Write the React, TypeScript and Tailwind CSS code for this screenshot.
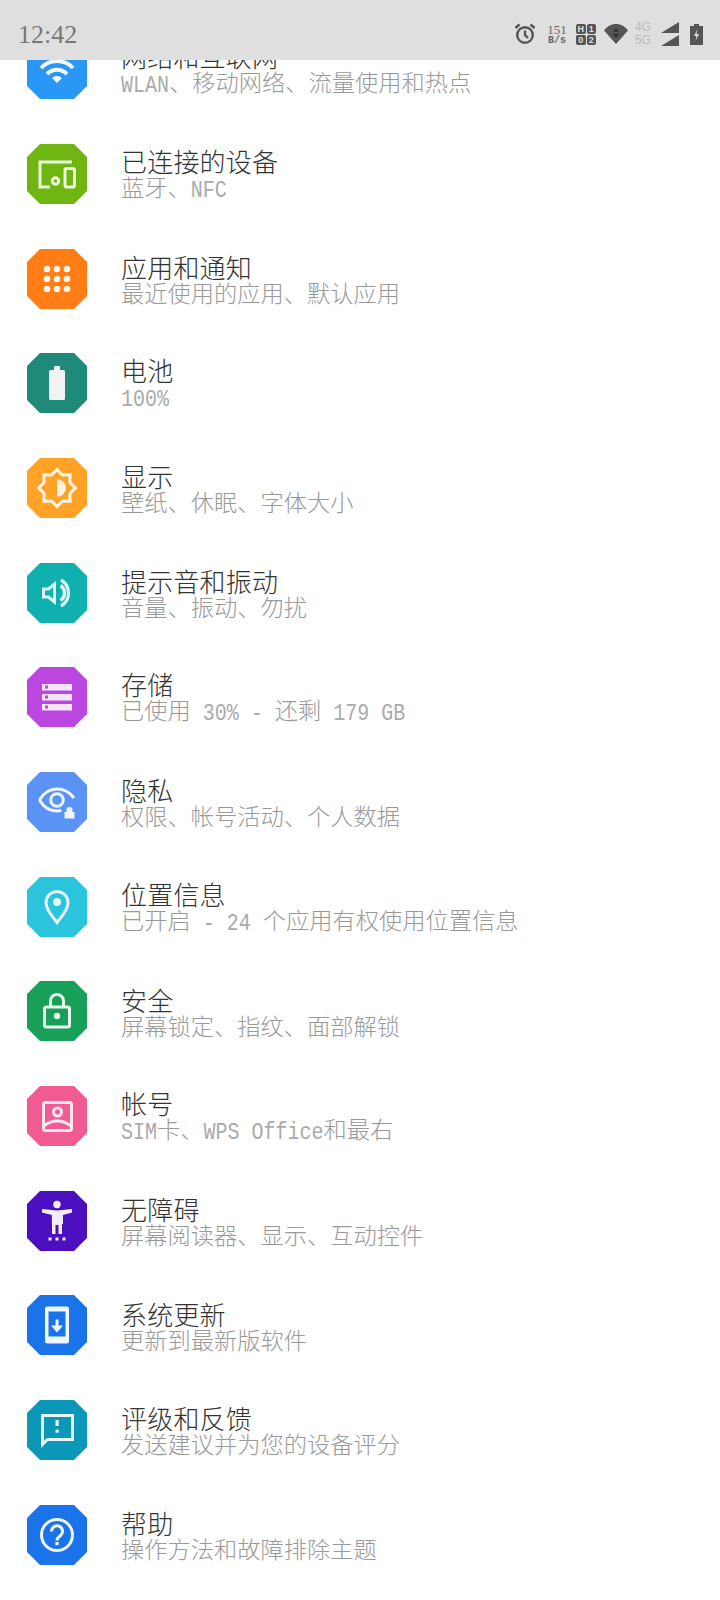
import React from 'react';

// 8-point sun outline for the display icon
const star = Array.from({ length: 16 }, (_, i) => {
  const r = i % 2 === 0 ? 18.5 : 14;
  const a = (i * Math.PI) / 8;
  return `${(30 + r * Math.sin(a)).toFixed(1)},${(30 - r * Math.cos(a)).toFixed(1)}`;
}).join(' ');

const icons: Record<string, React.ReactNode> = {
  wifi: (
    <g fill="none" stroke="#f2f8ff" strokeWidth="4">
      <path d="M14 29a22 22 0 0 1 32 0" />
      <path d="M20 35a14 14 0 0 1 20 0" />
      <path d="M25 39a7 7 0 0 1 10 0l-5 5z" fill="#f2f8ff" stroke="none" />
    </g>
  ),
  devices: (
    <g fill="none" stroke="#eef8e0" strokeWidth="3">
      <path d="M45 18H13v25h10" />
      <circle cx="28.500" cy="37" r="3.200" />
      <rect x="38" y="24.500" width="9.500" height="18.500" rx="1.500" />
    </g>
  ),
  apps: (
    <g fill="#fff3e6">
      {[20, 30, 40].map((y) =>
        [20, 30, 40].map((x) => <circle key={`${x}-${y}`} cx={x} cy={y} r="3.300" />)
      )}
    </g>
  ),
  battery: (
    <g fill="#f2f2f2">
      <rect x="27" y="13" width="6" height="5" rx="1" />
      <rect x="22" y="17" width="16" height="30" rx="1.500" />
    </g>
  ),
  display: (
    <g>
      <polygon points={star} fill="none" stroke="#fdf3e3" strokeWidth="3" />
      <path d="M30 21a9 9 0 0 1 0 18z" fill="#fdf3e3" />
    </g>
  ),
  sound: (
    <g fill="none" stroke="#dcf7f5">
      <path d="M16.500 26h5l6-5v18l-6-5h-5z" strokeWidth="3" />
      <path d="M33.500 22.500a9 9 0 0 1 0 15" strokeWidth="3.500" />
      <path d="M34 17a15 15 0 0 1 0 26" strokeWidth="3.200" />
    </g>
  ),
  storage: (
    <g>
      {[17, 27, 37].map((y) => (
        <g key={y}>
          <rect x="15" y={y} width="30" height="6.500" fill="#f6e4fb" />
          <rect x="18" y={y + 1.5} width="3" height="3" fill="#bb47e0" />
        </g>
      ))}
    </g>
  ),
  privacy: (
    <g>
      <path d="M12.500 28c4-7 10.500-11 17.500-11s13 3.500 17 9" fill="none" stroke="#eef4ff" strokeWidth="3" />
      <path d="M12.500 28c4 7 10.500 11 17.500 11 1.500 0 3 0 4.500-.6" fill="none" stroke="#eef4ff" strokeWidth="3" />
      <circle cx="30" cy="28" r="6.300" fill="none" stroke="#eef4ff" strokeWidth="3" />
      <path d="M39.500 40v-2a3 3 0 0 1 6 0v2h2v6.500h-10V40z" fill="#eef4ff" />
    </g>
  ),
  location: (
    <g>
      <path d="M30 45.500c-6-8-11-13.500-11-20a11 11 0 0 1 22 0c0 6.500-5 12-11 20z" fill="none" stroke="#e6f9fc" strokeWidth="3" />
      <circle cx="30" cy="25" r="4" fill="#e6f9fc" />
    </g>
  ),
  lock: (
    <g fill="none" stroke="#e9f8ef" strokeWidth="3">
      <rect x="17.500" y="26" width="25" height="20" rx="2" />
      <path d="M23.500 26v-6a6.500 6.500 0 0 1 13 0v6" />
      <circle cx="30" cy="35" r="3.200" fill="#e9f8ef" stroke="none" />
    </g>
  ),
  account: (
    <g fill="none" stroke="#fde6ef" strokeWidth="3">
      <rect x="16.500" y="16.500" width="28" height="28" rx="2" />
      <circle cx="30.500" cy="26" r="4" />
      <path d="M17 40c4-3.500 9-5 13.500-5s9 1.500 13.500 5" />
    </g>
  ),
  access: (
    <g fill="#f3ecfc">
      <circle cx="30" cy="13.500" r="3.700" />
      <path d="M15 18l15 1.500 15-1.500v3.500l-9 2.500v9h-1V43h-3.500V34h-3v9H25V34h-.1v-10l-9.900-2.500z" />
      <rect x="21.500" y="46.500" width="3" height="3" />
      <rect x="28.500" y="46.500" width="3" height="3" />
      <rect x="35.500" y="46.500" width="3" height="3" />
    </g>
  ),
  update: (
    <g>
      <rect x="18" y="11.500" width="24" height="37" rx="2.500" fill="#f0f6ff" />
      <rect x="21.500" y="16.500" width="17" height="25" fill="#1a73e8" />
      <path d="M28.500 24.500h3v6H36l-6 7-6-7h4.500z" fill="#f0f6ff" />
    </g>
  ),
  feedback: (
    <g>
      <path d="M15.500 15.500h30v24h-25l-5 5z" fill="none" stroke="#e6f6fa" strokeWidth="3" />
      <rect x="28.500" y="20" width="3.200" height="6" fill="#e6f6fa" />
      <rect x="28.500" y="29.500" width="3.200" height="3.200" fill="#e6f6fa" />
    </g>
  ),
  help: (
    <g>
      <circle cx="30" cy="30" r="15.500" fill="none" stroke="#eef5ff" strokeWidth="3" />
      <path d="M24.500 26.500a5.500 5.500 0 1 1 9 4c-2 1.700-3.500 2.500-3.500 5" fill="none" stroke="#eef5ff" strokeWidth="3" />
      <rect x="28.400" y="37" width="3.200" height="3.200" fill="#eef5ff" />
    </g>
  ),
};

const rows = [
  { icon: 'wifi', color: '#2a96f5', title: '网络和互联网', sub: 'WLAN、移动网络、流量使用和热点' },
  { icon: 'devices', color: '#6fb612', title: '已连接的设备', sub: '蓝牙、NFC' },
  { icon: 'apps', color: '#ff7d14', title: '应用和通知', sub: '最近使用的应用、默认应用' },
  { icon: 'battery', color: '#1f8a7a', title: '电池', sub: '100%' },
  { icon: 'display', color: '#ffa226', title: '显示', sub: '壁纸、休眠、字体大小' },
  { icon: 'sound', color: '#0fb0ae', title: '提示音和振动', sub: '音量、振动、勿扰' },
  { icon: 'storage', color: '#bb47e0', title: '存储', sub: '已使用 30% - 还剩 179 GB' },
  { icon: 'privacy', color: '#5b93f5', title: '隐私', sub: '权限、帐号活动、个人数据' },
  { icon: 'location', color: '#2bc4dd', title: '位置信息', sub: '已开启 - 24 个应用有权使用位置信息' },
  { icon: 'lock', color: '#18a058', title: '安全', sub: '屏幕锁定、指纹、面部解锁' },
  { icon: 'account', color: '#f05b92', title: '帐号', sub: 'SIM卡、WPS Office和最右' },
  { icon: 'access', color: '#4c0fbf', title: '无障碍', sub: '屏幕阅读器、显示、互动控件' },
  { icon: 'update', color: '#1a73e8', title: '系统更新', sub: '更新到最新版软件' },
  { icon: 'feedback', color: '#0b97b8', title: '评级和反馈', sub: '发送建议并为您的设备评分' },
  { icon: 'help', color: '#1a73e8', title: '帮助', sub: '操作方法和故障排除主题' },
];

// latin runs in the subtitles are a tall narrow monospace in the screenshot
const SubText = ({ text }: { text: string }) => (
  <>
    {text.split(/([A-Za-z0-9%\- ]+)/).map((part, i) =>
      i % 2 === 1 ? (
        <span
          key={i}
          className="inline-block whitespace-pre text-[20px] leading-none text-[#aaa] scale-y-[1.2] font-['Liberation_Mono',monospace]"
        >
          {part}
        </span>
      ) : (
        <span key={i}>{part}</span>
      )
    )}
  </>
);

const StatusIcons = () => (
  <div className="flex items-center">
    <svg width="24" height="24" viewBox="0 0 24 24" className="mr-[10px]" fill="none" stroke="#555" strokeWidth="2.400">
      <circle cx="12" cy="13" r="7.800" />
      <path d="M12 8.500V13l3 3" />
      <path d="M2.500 6l4-3.500M21.500 6l-4-3.500" />
    </svg>
    <div className="w-[20px] mr-[9px] flex flex-col items-center text-[#666] font-['Liberation_Serif',serif]">
      <span className="text-[13px] leading-[13px]">151</span>
      <span className="text-[10px] leading-[10px] font-['Liberation_Mono',monospace] font-bold">B/s</span>
    </div>
    <div className="w-[20px] h-[21px] mr-[8px] grid grid-cols-2 gap-[1px] text-[9px] leading-[10px] font-bold text-[#dfdfdf] text-center font-['Liberation_Sans',sans-serif]">
      <span className="bg-[#555] rounded-[2px]">H</span>
      <span className="bg-[#555] rounded-[2px]">1</span>
      <span className="bg-[#555] rounded-[2px]">0</span>
      <span className="bg-[#555] rounded-[2px]">2</span>
    </div>
    <svg width="24" height="20" viewBox="0 0 24 20" className="mr-[7px]">
      <path d="M0 6.500C3 2.500 7 0 12 0s9 2.500 12 6.500L12 20z" fill="#555" />
      <path d="M12 4l3 4H9zM12 14l-3-4h6z" fill="#333" />
    </svg>
    <div className="w-[16px] mr-[10px] flex flex-col text-[12px] leading-[13px] text-[#bbb] text-center font-['Liberation_Sans',sans-serif]">
      <span>4G</span>
      <span>5G</span>
    </div>
    <svg width="18" height="24" viewBox="0 0 18 24" className="mr-[11px]" fill="#555">
      <path d="M0 11L18 0v11zM0 24l18-11v11z" />
    </svg>
    <svg width="13" height="21" viewBox="0 0 13 21" className="mr-[17px]">
      <path d="M4 0h5v2h4v19H0V2h4z" fill="#555" />
      <path d="M7.500 5L4 12h2.500l-1 5L9 10H6.500z" fill="#dfdfdf" />
    </svg>
  </div>
);

export default function App() {
  return (
    <div className="w-[720px] h-[1600px] overflow-hidden bg-white font-['Noto_Sans_CJK_SC',sans-serif]">
      <div className="relative z-10 h-[60px] pt-[8px] pl-[18px] bg-[#dfdfdf] flex items-center justify-between">
        <span className="text-[26px] text-[#777] font-['Liberation_Serif',serif]">12:42</span>
        <StatusIcons />
      </div>
      <div className="-mt-[43px]">
        {rows.map((row) => (
          <div key={row.title} className="h-[104.67px] pl-[27px] flex items-center">
            <svg width="60" height="60" viewBox="0 0 60 60" className="shrink-0">
              <path d="M13 0h34l13 13v34L47 60H13L0 47V13z" fill={row.color} />
              {icons[row.icon]}
            </svg>
            <div className="ml-[34px]">
              <div className="text-[26px] leading-[27px] font-light tracking-[0.2px] text-[#333]">{row.title}</div>
              <div className="text-[23.25px] leading-[24px] font-light text-[#999]">
                <SubText text={row.sub} />
              </div>
            </div>
          </div>
        ))}
      </div>
    </div>
  );
}
